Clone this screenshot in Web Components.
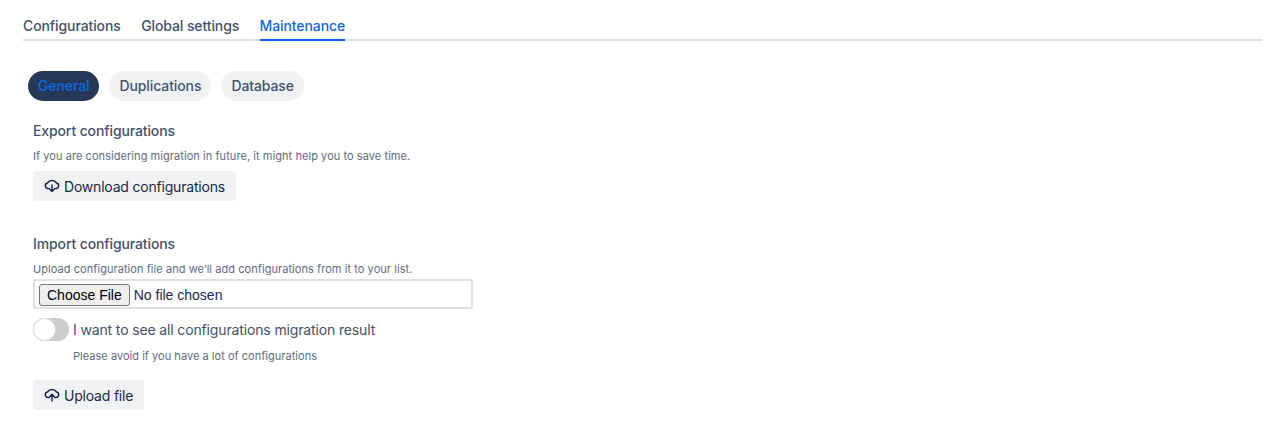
<!DOCTYPE html>
<html><head><meta charset="utf-8"><title>Maintenance</title>
<style>
html,body{margin:0;padding:0;background:#fff;}
body{font-family:Inter,"Liberation Sans",sans-serif;color:#42526e;height:428px;overflow:hidden;}
</style></head><body>
<app-page>
  <tab-bar>
    <tab-item>Configurations</tab-item>
    <tab-item>Global settings</tab-item>
    <tab-item active>Maintenance</tab-item>
  </tab-bar>
  <pill-bar>
    <pill-item active>General</pill-item>
    <pill-item>Duplications</pill-item>
    <pill-item>Database</pill-item>
  </pill-bar>
  <form-section style="--mt:20px" title-text="Export configurations" desc="If you are considering migration in future, it might help you to save time.">
    <cloud-button direction="down">Download configurations</cloud-button>
  </form-section>
  <form-section style="--mt:33px" title-text="Import configurations" desc="Upload configuration file and we’ll add configurations from it to your list.">
    <file-field></file-field>
    <toggle-row label="I want to see all configurations migration result" hint="Please avoid if you have a lot of configurations"></toggle-row>
    <cloud-button direction="up" style="--btn-mt:16px">Upload file</cloud-button>
  </form-section>
</app-page>
<script>
function def(name, css, html){
  customElements.define(name, class extends HTMLElement{
    connectedCallback(){
      if(this.shadowRoot) return;
      const r=this.attachShadow({mode:'open'});
      const h=typeof html==='function'?html(this):html;
      r.innerHTML='<style>'+css+'</style>'+h;
    }
  });
}
def('app-page',':host{display:block;padding:12px 0 0 23px}','<slot></slot>');
def('tab-bar',':host{display:flex;gap:20.4px;height:29px;box-sizing:border-box;border-bottom:2px solid #dfe1e6;font-size:14px;font-weight:500;letter-spacing:-.1px}','<slot></slot>');
def('tab-item',`:host{display:block;height:29px;box-sizing:border-box;line-height:28px;color:#42526e}
:host([active]){color:#0c66e4;border-bottom:2px solid #0c66e4}`,'<slot></slot>');
def('pill-bar',':host{display:flex;gap:10px;margin:30px 0 0 5px;font-size:14px;font-weight:500;letter-spacing:-.1px}','<slot></slot>');
def('pill-item',`:host{display:block;height:30px;line-height:30px;padding:0 10px;border-radius:15px;background:#f1f2f4;color:#42526e}
:host([active]){background:#253858;color:#0c66e4}`,'<slot></slot>');
def('form-section',`:host{display:block;margin:var(--mt,0) 0 0 10px}
.t{font-size:14px;font-weight:500;line-height:20px;color:#42526e;letter-spacing:-.12px}
.d{font-size:11px;line-height:16px;color:#5e6c84;margin-top:7px;letter-spacing:.06px}`,
 e=>`<div class="t">${e.getAttribute('title-text')}</div><div class="d">${e.getAttribute('desc')}</div><slot></slot>`);
def('cloud-button',`:host{display:flex;width:fit-content;align-items:center;height:30px;margin-top:var(--btn-mt,7px);padding:0 11px;gap:4px;border-radius:3px;background:#f1f2f4;color:#172b4d;font-size:14px;letter-spacing:-.2px}
svg{width:16px;height:16px;display:block;flex:none}`,
 e=>{
  const arrow=e.getAttribute('direction')==='up'?'<path d="M8 14V7.4M5.8 9.6 8 7.4l2.2 2.2"/>':'<path d="M8 7V13.4M5.8 11.2 8 13.4l2.2-2.2"/>';
  return `<svg viewBox="0 0 16 16" fill="none" stroke="currentColor" stroke-width="1.5" stroke-linecap="round" stroke-linejoin="round"><path d="M5.2 10.5H3.9A2.8 2.8 0 0 1 3.4 5 5.5 5.5 0 0 1 12.6 5 2.8 2.8 0 0 1 12.1 10.5H10.8"/>${arrow}</svg><span><slot></slot></span>`;
 });
def('file-field',`:host{display:flex;align-items:center;box-sizing:border-box;width:440px;height:30px;margin-top:2px;border:2px solid #dfe1e6;border-radius:3px;padding:2px 4px 0;font-family:"Liberation Sans",Arial,sans-serif;font-size:14px;color:#172b4d}
.b{box-sizing:border-box;height:22px;line-height:20px;padding:0 7px;border:1px solid #767676;border-radius:3px;background:#efefef;color:#000;margin-right:4px}`,
 `<span class="b">Choose File</span><span>No file chosen</span>`);
def('toggle-row',`:host{display:block;margin-top:8px}
.r{display:flex;align-items:center;height:24px;gap:4px}
.s{box-sizing:border-box;width:36px;height:23px;border-radius:12px;background:#cccccc;position:relative;flex:none}
.k{position:absolute;left:0;top:0;width:23px;height:23px;box-sizing:border-box;border-radius:50%;background:#fff;border:1px solid #dcdcdc}
.l{font-size:14px;color:#42526e;letter-spacing:-.14px}
.h{font-size:11px;line-height:16px;color:#5e6c84;margin:7px 0 0 40px;letter-spacing:.03px}`,
 e=>`<div class="r"><span class="s"><span class="k"></span></span><span class="l">${e.getAttribute('label')}</span></div><div class="h">${e.getAttribute('hint')}</div>`);
</script>
</body></html>
